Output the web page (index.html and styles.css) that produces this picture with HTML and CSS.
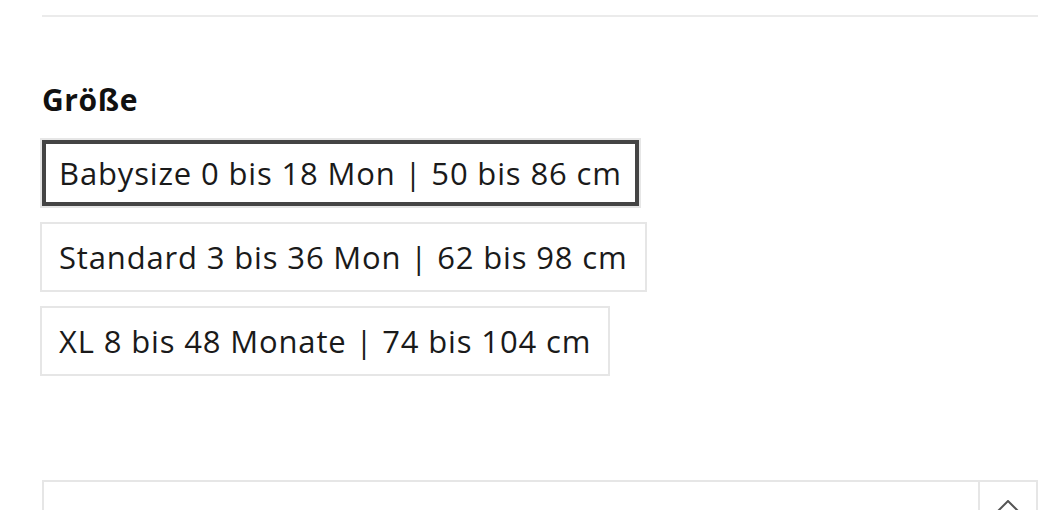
FILE: index.html
```html
<!DOCTYPE html>
<html lang="de">

<head>
    <meta charset="UTF-8">
    <meta name="viewport" content="width=device-width, initial-scale=1.0">
    <title>Größe wählen</title>
    <link rel="stylesheet" href="styles.css">
</head>

<body>
    <div class="product">
        <hr class="divider">

        <div class="variant">
            <h3 class="variantTitle">Größe</h3>
            <div class="variantOptions">
                <button class="option selected">Babysize 0 bis 18 Mon | 50 bis 86 cm</button>
                <button class="option">Standard 3 bis 36 Mon | 62 bis 98 cm</button>
                <button class="option">XL 8 bis 48 Monate | 74 bis 104 cm</button>
            </div>
        </div>

        <div class="quantity">
            <div class="quantityField"></div>
            <div class="quantityStep">
                <svg width="22" height="12" viewBox="0 0 22 12">
                    <polyline points="1,11 11,1 21,11" fill="none" stroke="#555" stroke-width="2" />
                </svg>
            </div>
        </div>
    </div>
</body>

</html>
```

FILE: styles.css
```css
body {
    font-family: "Open Sans", Lato, sans-serif;
    color: #222;
    background-color: #fff;
    margin: 0;
    padding: 0;
    overflow: hidden;
}

.product {
    padding: 15px 9px 0 40px;
}

.divider {
    border: none;
    height: 2px;
    background-color: #ebebeb;
    margin: 0 0 0 2px;
}

.variant {
    margin-top: 65px;
}

.variantTitle {
    font-size: 30px;
    font-weight: bold;
    letter-spacing: 0.6px;
    color: #111;
    margin: 0 0 20px 2px;
    line-height: 36px;
}

.variantOptions {
    display: flex;
    flex-direction: column;
    align-items: flex-start;
    gap: 14px;
}

.option {
    font-family: "Open Sans", Lato, sans-serif;
    font-size: 31px;
    font-weight: 400;
    letter-spacing: 0.85px;
    color: #1a1a1a;
    background-color: #fff;
    border: 2px solid #e6e6e6;
    height: 70px;
    padding: 0 17px;
    cursor: pointer;
    outline: none;
}

.option.selected {
    box-shadow: inset 0 0 0 4px #444;
}

.quantity {
    display: flex;
    margin: 104px 0 0 2px;
    height: 60px;
    border: 2px solid #e6e6e6;
}

.quantityField {
    flex: 1;
    border-right: 2px solid #e6e6e6;
}

.quantityStep {
    width: 56px;
    display: flex;
    justify-content: center;
    padding-top: 18px;
}
```
